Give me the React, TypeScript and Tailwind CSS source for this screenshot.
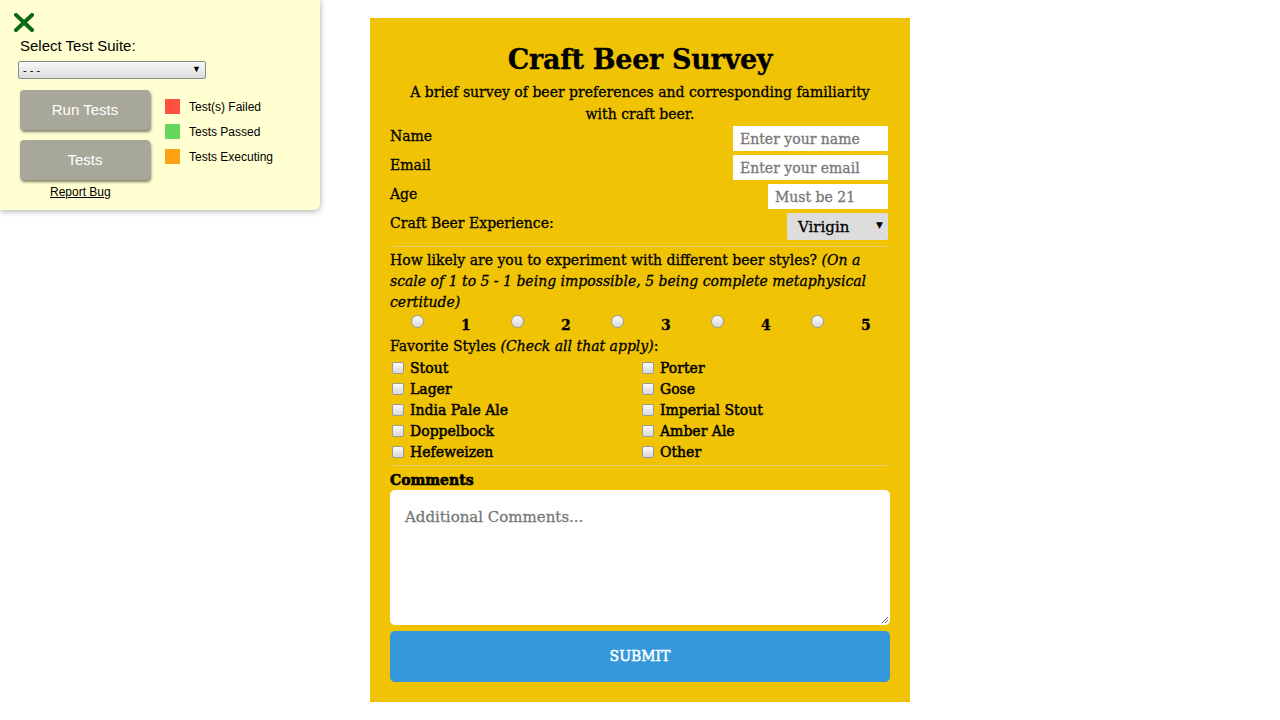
import React from "react";

const serif = "font-['DejaVu_Serif','Liberation_Serif',serif]";
const sans = "font-['Liberation_Sans',Arial,sans-serif]";

const styles = [
  ["Stout", "Porter"],
  ["Lager", "Gose"],
  ["India Pale Ale", "Imperial Stout"],
  ["Doppelbock", "Amber Ale"],
  ["Hefeweizen", "Other"],
];

function TestPanel() {
  return (
    <div className={`absolute left-0 top-0 w-[320px] h-[210px] bg-[#ffffd2] rounded-br-md shadow-[0_1px_6px_rgba(0,0,0,0.35)] ${sans}`}>
      <svg className="absolute left-[14px] top-[13px]" width="20" height="19" viewBox="0 0 20 19">
        <path d="M2 2 L18 17 M18 2 L2 17" stroke="#0a6a12" strokeWidth="4" strokeLinecap="square" />
      </svg>
      <div className="absolute left-[20px] top-[35px] text-[15px] text-black">Select Test Suite:</div>
      <div className="absolute left-[18px] top-[61px] w-[188px] h-[18px] border border-[#8a8a8a] rounded-[2px] bg-gradient-to-b from-[#f8f8f8] to-[#dcdcdc] flex items-center justify-between px-1 text-[11px]">
        <span>- - -</span>
        <span className="text-[9px]">▼</span>
      </div>
      <div className="absolute left-[20px] top-[90px] flex flex-col gap-[10px]">
        <div className="w-[130px] h-[40px] rounded bg-[#a8a89a] shadow-[1px_2px_3px_rgba(0,0,0,0.5)] flex items-center justify-center text-white text-[15px]">Run Tests</div>
        <div className="w-[130px] h-[40px] rounded bg-[#a8a89a] shadow-[1px_2px_3px_rgba(0,0,0,0.5)] flex items-center justify-center text-white text-[15px]">Tests</div>
      </div>
      <div className="absolute left-[50px] top-[183px] text-[12px] underline">Report Bug</div>
      <div className="absolute left-[165px] top-[99px] flex flex-col gap-[10px] text-[12px]">
        <div className="flex items-center gap-[9px] h-[15px]"><span className="w-[15px] h-[15px] bg-[#ff513f]" />Test(s) Failed</div>
        <div className="flex items-center gap-[9px] h-[15px]"><span className="w-[15px] h-[15px] bg-[#64d75c]" />Tests Passed</div>
        <div className="flex items-center gap-[9px] h-[15px]"><span className="w-[15px] h-[15px] bg-[#ffa114]" />Tests Executing</div>
      </div>
    </div>
  );
}

function Radio() {
  return <span className="w-[13px] h-[13px] rounded-full border border-[#9a9a9a] bg-gradient-to-b from-[#fafafa] to-[#d8d8d8] inline-block" />;
}

function Check() {
  return <span className="w-[12px] h-[12px] rounded-[2px] border border-[#9a9a9a] bg-gradient-to-b from-[#fafafa] to-[#d8d8d8] inline-block shrink-0" />;
}

export default function App() {
  return (
    <div className="relative w-[1280px] h-[720px] bg-white overflow-hidden">
      <TestPanel />
      <div className={`absolute left-[370px] top-[18px] w-[540px] h-[684px] bg-[#f0c405] px-[20px] pt-[22px] text-black [-webkit-text-stroke:0.3px] ${serif}`}>
        <h1 className="text-center text-[27px] font-bold leading-[40px] tracking-[-0.3px]">Craft Beer Survey</h1>
        <p className="mt-[1px] text-center text-[14px] leading-[22px] px-[10px]">A brief survey of beer preferences and corresponding familiarity with craft beer.</p>

        <div className="mt-[1px] flex flex-col gap-[4px] text-[14px]">
          <div className="flex justify-between items-start h-[25px] pr-[2px]">
            <span className="leading-[20px]">Name</span>
            <div className="w-[155px] h-[25px] bg-white px-[7px] leading-[26px] text-[#777]">Enter your name</div>
          </div>
          <div className="flex justify-between items-start h-[25px] pr-[2px]">
            <span className="leading-[20px]">Email</span>
            <div className="w-[155px] h-[25px] bg-white px-[7px] leading-[26px] text-[#777]">Enter your email</div>
          </div>
          <div className="flex justify-between items-start h-[25px] pr-[2px]">
            <span className="leading-[20px]">Age</span>
            <div className="w-[120px] h-[25px] bg-white px-[7px] leading-[26px] text-[#777]">Must be 21</div>
          </div>
          <div className="flex justify-between items-start h-[27px] pr-[2px]">
            <span className="leading-[20px]">Craft Beer Experience:</span>
            <div className="w-[101px] h-[27px] bg-[#dddddd] rounded-[2px] pl-[11px] pr-[5px] flex items-center justify-between text-[15px]">
              <span className="mt-[2px]">Virigin</span>
              <span className="text-[9px] self-start mt-[6px] [-webkit-text-stroke:0px]">▼</span>
            </div>
          </div>
        </div>

        <div className="mt-[6px] border-t border-[#e2cf6a]" />
        <p className="mt-[3px] text-[14px] leading-[21px]">
          How likely are you to experiment with different beer styles? <i>(On a scale of 1 to 5 - 1 being impossible, 5 being complete metaphysical certitude)</i>
        </p>
        <div className="grid grid-cols-5 h-[22px] text-[14px] font-bold">
          {[1, 2, 3, 4, 5].map((n) => (
            <div key={n} className="flex items-start pl-[21px]">
              <span><Radio /></span>
              <span className="ml-[37px] mt-[3px] leading-[18px]">{n}</span>
            </div>
          ))}
        </div>

        <p className="text-[14px] leading-[21px] mt-[1px]">
          Favorite Styles <i>(Check all that apply)</i>:
        </p>
        <div className="flex flex-col text-[14px]">
          {styles.map(([a, b]) => (
            <div key={a} className="grid grid-cols-2 h-[21px]">
              <div className="flex items-start pl-[2px] gap-[6px]"><span className="mt-[2px]"><Check /></span><span className="leading-[22px] [-webkit-text-stroke:0.5px]">{a}</span></div>
              <div className="flex items-start pl-[2px] gap-[6px]"><span className="mt-[2px]"><Check /></span><span className="leading-[22px] [-webkit-text-stroke:0.5px]">{b}</span></div>
            </div>
          ))}
        </div>

        <div className="mt-[3px] border-t border-[#e2cf6a]" />
        <div className="mt-[4px] text-[14px] font-bold leading-[20px] [-webkit-text-stroke:0.6px]">Comments</div>
        <div className="h-[135px] bg-white rounded-[5px] relative px-[15px] pt-[16px] text-[15px] text-[#777]">
          Additional Comments...
          <svg className="absolute right-[1px] bottom-[1px]" width="8" height="8" viewBox="0 0 8 8">
            <path d="M1 7 L7 1 M4 7 L7 4" stroke="#666" strokeWidth="1" />
          </svg>
        </div>
        <div className="mt-[6px] h-[51px] bg-[#3498db] rounded-[5px] flex items-center justify-center text-white text-[14px] [-webkit-text-stroke:0.5px_white]">SUBMIT</div>
      </div>
    </div>
  );
}
